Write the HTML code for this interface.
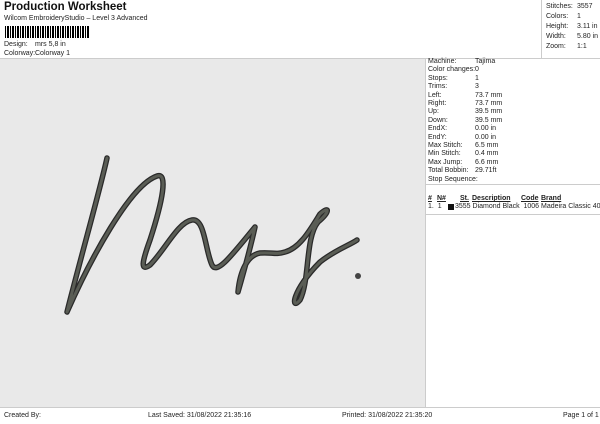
<!DOCTYPE html>
<html><head><style>
body{margin:0;width:600px;height:424px;background:#fff;font-family:"Liberation Sans",sans-serif;color:#222;position:relative;overflow:hidden}
.a{position:absolute;white-space:nowrap}
.s{font-size:7px;line-height:8.4px}
</style></head><body>
<div class="a" style="left:4px;top:1px;font-size:11.5px;font-weight:bold;color:#111">Production Worksheet</div>
<div class="a s" style="left:4px;top:15px">Wilcom EmbroideryStudio – Level 3 Advanced</div>
<div class="a" style="left:5px;top:26px;width:84px;height:12px;background:repeating-linear-gradient(90deg,#000 0 1px,#fff 1px 2px,#000 2px 3px,#000 3px 4px,#fff 4px 5px)"></div>
<div class="a s" style="left:4px;top:41px">Design:</div><div class="a s" style="left:35px;top:41px">mrs 5,8 in</div>
<div class="a s" style="left:4px;top:50px">Colorway:</div><div class="a s" style="left:35px;top:50px">Colorway 1</div>
<div class="a" style="left:541px;top:0;width:1px;height:58px;background:#ccc"></div>
<div class="a s" style="left:546px;top:2px;line-height:10px">Stitches:<br>Colors:<br>Height:<br>Width:<br>Zoom:</div>
<div class="a s" style="left:577px;top:2px;line-height:10px">3557<br>1<br>3.11 in<br>5.80 in<br>1:1</div>
<div class="a" style="left:0;top:58px;width:600px;height:1px;background:#ccc"></div>
<div class="a" style="left:0;top:59px;width:425px;height:348px;background:#e9e9e9"></div>
<div class="a" style="left:425px;top:59px;width:1px;height:348px;background:#ccc"></div>
<svg class="a" style="left:0;top:59px" width="425" height="348" viewBox="0 59 425 348">
<g fill="none" stroke-linecap="round" stroke-linejoin="round">
<path d="M107 158 C100 190 80 260 67 312 C90 260 130 185 157 176 C168 172 163 200 150 240 C142 262 140 272 150 265 C165 250 178 222 192 220 C205 218 205 250 212 265 C217 275 232 255 255 227 C250 250 240 285 238 292 C240 270 248 255 260 253 C272 252 275 255 285 252 C300 248 310 230 320 214 C330 205 330 212 318 222 C305 238 310 280 300 300 C290 312 292 290 320 262 C335 250 350 245 357 240" stroke="#2a2a2a" stroke-width="5.5"/>
<path d="M107 158 C100 190 80 260 67 312 C90 260 130 185 157 176 C168 172 163 200 150 240 C142 262 140 272 150 265 C165 250 178 222 192 220 C205 218 205 250 212 265 C217 275 232 255 255 227 C250 250 240 285 238 292 C240 270 248 255 260 253 C272 252 275 255 285 252 C300 248 310 230 320 214 C330 205 330 212 318 222 C305 238 310 280 300 300 C290 312 292 290 320 262 C335 250 350 245 357 240" stroke="#5a5d55" stroke-width="3"/>
</g>
<circle cx="358" cy="276" r="3" fill="#444"/>
</svg>
<div class="a s" style="left:428px;top:58px">Machine:<br>Color changes:<br>Stops:<br>Trims:<br>Left:<br>Right:<br>Up:<br>Down:<br>EndX:<br>EndY:<br>Max Stitch:<br>Min Stitch:<br>Max Jump:<br>Total Bobbin:<br>Stop Sequence:</div>
<div class="a s" style="left:475px;top:58px">Tajima<br>0<br>1<br>3<br>73.7 mm<br>73.7 mm<br>39.5 mm<br>39.5 mm<br>0.00 in<br>0.00 in<br>6.5 mm<br>0.4 mm<br>6.6 mm<br>29.71ft</div>
<div class="a" style="left:426px;top:184px;width:174px;height:1px;background:#ccc"></div>
<div class="a s" style="left:428px;top:195px;font-weight:bold;text-decoration:underline">#</div>
<div class="a s" style="left:437px;top:195px;font-weight:bold;text-decoration:underline">N#</div>
<div class="a s" style="left:460px;top:195px;font-weight:bold;text-decoration:underline">St.</div>
<div class="a s" style="left:472px;top:195px;font-weight:bold;text-decoration:underline">Description</div>
<div class="a s" style="left:521px;top:195px;font-weight:bold;text-decoration:underline">Code</div>
<div class="a s" style="left:541px;top:195px;font-weight:bold;text-decoration:underline">Brand</div>
<div class="a s" style="left:428px;top:203px">1.&nbsp;&nbsp;1</div>
<div class="a" style="left:448px;top:204px;width:6px;height:6px;background:#111"></div>
<div class="a s" style="left:455px;top:203px">3555 Diamond Black&nbsp;&nbsp;1006 Madeira Classic 40</div>
<div class="a" style="left:426px;top:214px;width:174px;height:1px;background:#ccc"></div>
<div class="a" style="left:0;top:407px;width:600px;height:1px;background:#ccc"></div>
<div class="a s" style="left:4px;top:412px">Created By:</div>
<div class="a s" style="left:148px;top:412px">Last Saved: 31/08/2022 21:35:16</div>
<div class="a s" style="left:342px;top:412px">Printed: 31/08/2022 21:35:20</div>
<div class="a s" style="left:563px;top:412px">Page 1 of 1</div>
</body></html>
